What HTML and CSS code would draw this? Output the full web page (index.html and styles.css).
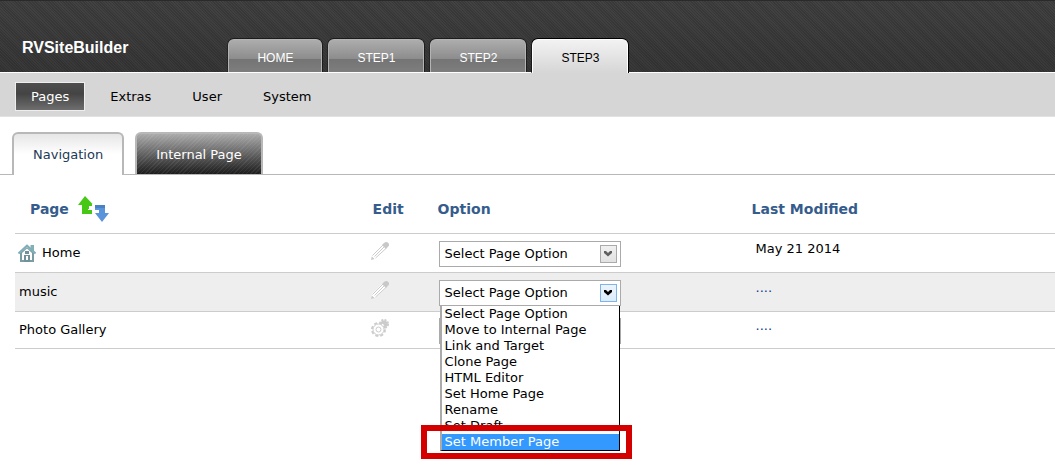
FILE: index.html
```html
<!DOCTYPE html>
<html lang="en">
<head>
  <meta charset="UTF-8" />
  <meta name="viewport" content="width=device-width, initial-scale=1.0"/>
  <title>RVSiteBuilder</title>
  <link rel="stylesheet" href="styles.css">
</head>
<body>
  <!-- icons used more than once -->
  <svg class="sprite" width="0" height="0" aria-hidden="true">
    <symbol id="pencil" viewBox="0 0 18 18">
      <path d="M0 18 1 13 12 2 16 6 5 16Z" fill="#fff"/>
      <path d="M1.500 13.500 12 3M4.500 16 15.500 6M3.500 14.500 13 5" fill="none" stroke="#ccc" stroke-width="1"/>
      <path d="M0 18 .8 14.500 3.500 17ZM11 3 13 1Q15.500-.8 17.300 1T17.200 4.500L15 7Z" fill="#c8c8c8"/>
    </symbol>
    <symbol id="chevron" viewBox="0 0 8 7">
      <path d="M0 1H2L4 3 6 1H8V3L4 6.500 0 3Z" fill="currentColor"/>
    </symbol>
  </svg>

  <header class="header">
    <h1 class="brand">RVSiteBuilder</h1>
    <nav class="steps">
      <a class="step" href="#">HOME</a>
      <a class="step" href="#">STEP1</a>
      <a class="step" href="#">STEP2</a>
      <a class="step active" href="#">STEP3</a>
    </nav>
  </header>

  <nav class="subnav">
    <a class="active" href="#">Pages</a>
    <a href="#">Extras</a>
    <a href="#">User</a>
    <a href="#">System</a>
  </nav>

  <nav class="tabs">
    <a class="tab active" href="#">Navigation</a>
    <a class="tab" href="#">Internal Page</a>
  </nav>

  <main class="content">
    <table class="pages">
      <colgroup>
        <col class="col-page"><col class="col-edit"><col class="col-option"><col>
      </colgroup>
      <thead>
        <tr>
          <th>
            <div class="page-head">
              Page
              <svg width="32" height="26" viewBox="0 0 32 26" aria-hidden="true">
                <path d="M7 0 14.500 8H10V14H14V18H4V9H0Z" fill="#46c814"/>
                <path d="M10 8H14V10H11V13H10Z" fill="#46c814"/>
                <path d="M17 9H27V17H31L24 26 17 17H21V14H17Z" fill="#5a94da"/>
                <path d="M17 9H27V12H17Z" fill="#4a80c4"/>
              </svg>
            </div>
          </th>
          <th>Edit</th>
          <th>Option</th>
          <th>Last Modified</th>
        </tr>
      </thead>
      <tbody>
        <tr>
          <td>
            <div class="page-name">
              <svg width="18" height="18" viewBox="0 0 18 18" aria-hidden="true">
                <path d="M2 9V18H16V9L9 3Z" fill="#7a9da3"/>
                <path d="M12.500 1H16V7H12.500Z" fill="#86aeb5"/>
                <path d="M4 9 9 4.500 14 9V16H4Z" fill="#fff"/>
                <path d="M.5 9.500 9 1.500 17.500 9.500" fill="none" stroke="#7eafb8" stroke-width="2"/>
                <path d="M7 7H11V10H7ZM6 11H12V18H6Z" fill="#719299"/>
                <path d="M8 12H10V16H8Z" fill="#fff"/>
              </svg>
              Home
            </div>
          </td>
          <td><a class="edit" href="#" aria-label="Edit Home"><svg width="18" height="18"><use href="#pencil"/></svg></a></td>
          <td>
            <div class="option">
              <select aria-label="Option for Home"><option>Select Page Option</option></select>
              <span class="arrow"><svg width="8" height="7"><use href="#chevron"/></svg></span>
            </div>
          </td>
          <td class="modified">May 21 2014</td>
        </tr>
        <tr class="odd">
          <td>music</td>
          <td><a class="edit" href="#" aria-label="Edit music"><svg width="18" height="18"><use href="#pencil"/></svg></a></td>
          <td>
            <div class="option open">
              <select aria-label="Option for music"><option>Select Page Option</option></select>
              <span class="arrow"><svg width="8" height="7"><use href="#chevron"/></svg></span>
              <ul class="menu" role="listbox" aria-label="Page options">
                <li role="option">Select Page Option</li>
                <li role="option">Move to Internal Page</li>
                <li role="option">Link and Target</li>
                <li role="option">Clone Page</li>
                <li role="option">HTML Editor</li>
                <li role="option">Set Home Page</li>
                <li role="option">Rename</li>
                <li role="option">Set Draft</li>
                <li role="option" class="selected" aria-selected="true">Set Member Page</li>
              </ul>
            </div>
          </td>
          <td class="modified"><a href="#">....</a></td>
        </tr>
        <tr>
          <td>Photo Gallery</td>
          <td>
            <a class="edit" href="#" aria-label="Edit Photo Gallery">
              <svg width="18" height="18" viewBox="0 0 18 18">
                <circle cx="13" cy="5" r="3.500" fill="#ccc"/>
                <circle cx="13" cy="5" r="4" fill="none" stroke="#ccc" stroke-width="2" stroke-dasharray="2 1.140"/>
                <circle cx="7.500" cy="10.500" r="7" fill="#fff"/>
                <circle cx="7.500" cy="10.500" r="6.500" fill="none" stroke="#ccc" stroke-width="2" stroke-dasharray="3 2.100"/>
                <circle cx="7.500" cy="10.500" r="5.500" fill="#fff" stroke="#ccc"/>
                <circle cx="7.500" cy="10.500" r="2.500" fill="#fff" stroke="#ccc"/>
              </svg>
            </a>
          </td>
          <td>
            <div class="option">
              <select aria-label="Option for Photo Gallery"><option>Select Page Option</option></select>
              <span class="arrow"><svg width="8" height="7"><use href="#chevron"/></svg></span>
            </div>
          </td>
          <td class="modified"><a href="#">....</a></td>
        </tr>
      </tbody>
    </table>
  </main>
</body>
</html>
```
FILE: styles.css
```css
* {
  box-sizing: border-box;
}
body {
  margin: 0;
  min-height: 100vh;
  background: #fff;
  color: #000;
  font: 13px/16px Verdana, "DejaVu Sans", sans-serif;
}
a {
  color: inherit;
  text-decoration: none;
}
svg {
  display: block;
}
.sprite {
  position: absolute;
}

/* top bar */
.header {
  display: flex;
  align-items: flex-end;
  gap: 100px;
  height: 73px;
  padding-left: 22px;
  border-top: 1px solid #2a2a2a;
  border-bottom: 1px solid #fff;
  background:
    repeating-linear-gradient(45deg, #0002 0 1px, #0000 1px 2px),
    linear-gradient(#424242, #383838);
  background-clip: padding-box;
}
.brand {
  margin: 0;
  padding-bottom: 15px;
  color: #fff;
  font: bold 16px/18px Arial, "Liberation Sans", sans-serif;
}
.steps {
  display: flex;
  gap: 6px;
}
.step {
  height: 33px;
  padding: 10px 28px 0;
  border: 1px solid #b4b4b4;
  border-bottom: 0;
  border-radius: 6px 6px 0 0;
  background: linear-gradient(#adadad, #8c8c8c 19px, #747474 19px, #7e7e7e);
  box-shadow: 0 0 0 1px #1c1c1c;
  clip-path: inset(-1px -1px 0 -1px);
  color: #fff;
  font: 12px/16px Arial, "Liberation Sans", sans-serif;
}
.step.active {
  height: 34px;
  margin-bottom: -1px;
  border-color: #fff;
  background: linear-gradient(#f2f2f2, #d6d6d6);
  box-shadow: 0 0 0 1px #000;
  color: #000;
}

.subnav {
  display: flex;
  gap: 9px;
  padding: 9px 15px 5px;
  border-bottom: 1px solid #e2e2e2;
  background: #d6d6d6;
}
.subnav a {
  padding: 6px 15px 5px;
  border: 1px solid transparent;
}
.subnav .active {
  border-color: #eee;
  background: linear-gradient(#4e4e4e, #444 40%, #6e6e6e);
  color: #fff;
}

/* page tabs */
.tabs {
  display: flex;
  gap: 11px;
  padding: 15px 12px 0;
  border-bottom: 1px solid #b8b8b8;
}
.tab {
  padding: 13px 19px 11px;
  border: 2px solid #b8b8b8;
  border-bottom: 0;
  border-radius: 6px 6px 0 0;
  background:
    repeating-linear-gradient(135deg, #fff1 0 1px, #fff0 1px 3px),
    linear-gradient(#aaa, #1c1c1c);
  color: #fff;
}
.tab.active {
  margin-bottom: -1px;
  padding-bottom: 12px;
  background: linear-gradient(#e6e6e6, #fff 20px);
  color: #223a55;
}

/* page list */
.content {
  padding: 0 0 120px 15px;
}
.pages {
  width: 100%;
  border-collapse: collapse;
  table-layout: fixed;
}
.col-page {
  width: 34%;
}
.col-edit {
  width: 65px;
}
.col-option {
  width: 314px;
}
.pages th {
  height: 58px;
  padding: 11px 4px 0;
  border-bottom: 1px solid #ccc;
  color: #355c8c;
  font-size: 14px;
  text-align: left;
}
.page-head {
  display: flex;
  align-items: center;
  gap: 9px;
  padding-left: 11px;
}
.pages td {
  height: 39px;
  padding: 0 4px;
  border-bottom: 1px solid #ccc;
}
.pages tr:last-child td {
  height: 37px;
}
.odd {
  background: #eee;
}
.page-name {
  display: flex;
  align-items: center;
  gap: 6px;
}
.page-name svg {
  margin-left: -1px;
}
.pages .edit {
  display: block;
  margin-left: -2px;
  padding-bottom: 4px;
}
.pages .modified {
  padding: 0 8px 8px;
}
.modified a {
  color: #123a8c;
}

.option {
  position: relative;
  width: 182px;
  margin-left: 1px;
  padding-top: 2px;
}
.option select {
  display: block;
  width: 100%;
  height: 26px;
  padding: 0 24px 0 5px;
  border: 1px solid #aaa;
  border-radius: 0;
  background: #fff;
  color: #000;
  font: inherit;
  appearance: none;
}
.arrow {
  position: absolute;
  top: 6px;
  right: 4px;
  display: grid;
  place-items: center;
  width: 17px;
  height: 18px;
  border: 1px solid #aaa;
  background: linear-gradient(#f0f0f0, #e2e2e2);
  color: #606060;
  pointer-events: none;
}
.open .arrow {
  border-color: #7eb4ea;
  background: linear-gradient(#ecf4fc, #dcecfc);
  color: #000;
}

.menu {
  position: absolute;
  z-index: 1;
  top: 100%;
  left: 1px;
  right: 1px;
  margin: 0;
  padding: 0;
  border: solid #000;
  border-width: 0 1px 1px 0;
  border-left: 2px solid #aaa;
  background: #fff;
  list-style: none;
}
.menu li {
  padding-left: 3px;
}
.menu .selected {
  position: relative;
  background: #39f;
  color: #fff;
}
.menu .selected::after {
  content: "";
  position: absolute;
  inset: -9px -13px -9px -21px;
  border: 6px solid #d40000;
}
```
